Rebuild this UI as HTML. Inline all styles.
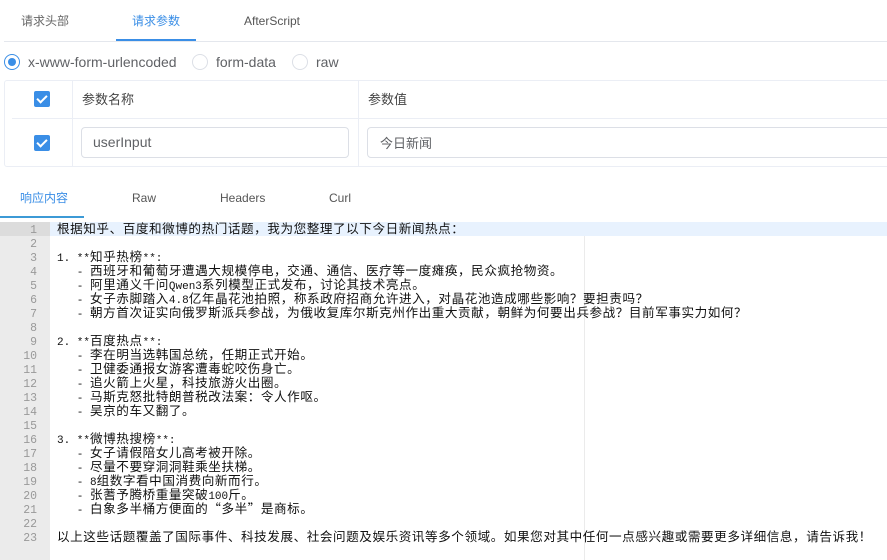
<!DOCTYPE html>
<html><head><meta charset="utf-8"><style>
*{margin:0;padding:0;box-sizing:border-box}
body{width:887px;height:560px;overflow:hidden;background:#fff;font-family:"Liberation Sans","Noto Sans CJK SC",sans-serif;position:relative;color:#606266}
.abs{position:absolute}
.t{font-size:12px;color:#555;line-height:16px}
.cb{position:absolute;width:16px;height:16px;background:#3a8ee6;border-radius:2px}
.cb:after{content:"";position:absolute;left:5px;top:2px;width:4px;height:8px;border:solid #fff;border-width:0 2px 2px 0;transform:rotate(45deg)}
.rad{position:absolute;width:16px;height:16px;border:1px solid #dcdfe6;border-radius:50%;background:#fff}
#ed{position:absolute;left:0;top:222px;width:887px;height:338px}
.ln{height:14px;line-height:14px;font-size:12.6px;letter-spacing:0.55px;white-space:pre;color:#111;font-family:"Noto Sans CJK SC","Liberation Mono",monospace;position:relative}
.ln b{font-weight:normal;font-family:"Liberation Mono",monospace;font-size:11px;letter-spacing:0}
.g{position:absolute;left:0;width:50px;text-align:right;padding-right:13px;color:#999;font-family:"Liberation Mono",monospace;font-size:11.5px;letter-spacing:0;background:#ebebeb;top:0;height:14px;line-height:17px}
.tx{position:absolute;left:57px;top:-1px;line-height:14px}
</style></head><body>
<div class="abs t" style="left:21px;top:13px;color:#666">请求头部</div>
<div class="abs t" style="left:132px;top:13px;color:#3a8ee6">请求参数</div>
<div class="abs t" style="left:244px;top:13px;color:#555">AfterScript</div>
<div class="abs" style="left:4px;top:41px;width:883px;height:1px;background:#e4e7ed"></div>
<div class="abs" style="left:116px;top:39px;width:80px;height:2px;background:#3a8ee6"></div>
<div class="rad" style="left:4px;top:54px;border-color:#3a8ee6"><div style="position:absolute;left:3px;top:3px;width:8px;height:8px;border-radius:50%;background:#3a8ee6"></div></div>
<div class="abs" style="left:28px;top:54px;font-size:14px;color:#606266">x-www-form-urlencoded</div>
<div class="rad" style="left:192px;top:54px"></div>
<div class="abs" style="left:216px;top:54px;font-size:14px">form-data</div>
<div class="rad" style="left:292px;top:54px"></div>
<div class="abs" style="left:316px;top:54px;font-size:14px">raw</div>
<div class="abs" style="left:4px;top:80px;width:900px;height:87px;border:1px solid #ebeef5;border-radius:3px"></div>
<div class="abs" style="left:12px;top:118px;width:880px;height:1px;background:#ebeef5"></div>
<div class="abs" style="left:72px;top:80px;width:1px;height:87px;background:#ebeef5"></div>
<div class="abs" style="left:358px;top:80px;width:1px;height:87px;background:#ebeef5"></div>
<div class="cb" style="left:34px;top:91px"></div>
<div class="cb" style="left:34px;top:135px"></div>
<div class="abs" style="left:82px;top:89px;font-size:13px;color:#444">参数名称</div>
<div class="abs" style="left:368px;top:89px;font-size:13px;color:#444">参数值</div>
<div class="abs" style="left:81px;top:127px;width:268px;height:31px;border:1px solid #dcdfe6;border-radius:4px;font-size:14px;line-height:29px;padding-left:11px;color:#606266">userInput</div>
<div class="abs" style="left:367px;top:127px;width:540px;height:31px;border:1px solid #dcdfe6;border-radius:4px;font-size:13px;line-height:31px;padding-left:12px;color:#606266">今日新闻</div>
<div class="abs t" style="left:20px;top:190px;color:#3a8ee6">响应内容</div>
<div class="abs t" style="left:132px;top:190px">Raw</div>
<div class="abs t" style="left:220px;top:190px">Headers</div>
<div class="abs t" style="left:329px;top:190px">Curl</div>
<div class="abs" style="left:0;top:216px;width:84px;height:2px;background:#3c9ad6"></div>
<div class="abs" style="left:0;top:222px;width:50px;height:338px;background:#ebebeb"></div>
<div class="abs" style="left:584px;top:222px;width:1px;height:338px;background:#ebebeb"></div>
<div id="ed">
<div class="ln" style="background:#e8f2fe"><span class="g" style="background:#dcdcdc">1</span><span class="tx">根据知乎、百度和微博的热门话题，我为您整理了以下今日新闻热点：</span></div>
<div class="ln"><span class="g">2</span></div>
<div class="ln"><span class="g">3</span><span class="tx"><b>1. **</b>知乎热榜<b>**:</b></span></div>
<div class="ln"><span class="g">4</span><span class="tx"><b>   - </b>西班牙和葡萄牙遭遇大规模停电，交通、通信、医疗等一度瘫痪，民众疯抢物资。</span></div>
<div class="ln"><span class="g">5</span><span class="tx"><b>   - </b>阿里通义千问<b>Qwen3</b>系列模型正式发布，讨论其技术亮点。</span></div>
<div class="ln"><span class="g">6</span><span class="tx"><b>   - </b>女子赤脚踏入<b>4.8</b>亿年晶花池拍照，称系政府招商允许进入，对晶花池造成哪些影响？要担责吗？</span></div>
<div class="ln"><span class="g">7</span><span class="tx"><b>   - </b>朝方首次证实向俄罗斯派兵参战，为俄收复库尔斯克州作出重大贡献，朝鲜为何要出兵参战？目前军事实力如何？</span></div>
<div class="ln"><span class="g">8</span></div>
<div class="ln"><span class="g">9</span><span class="tx"><b>2. **</b>百度热点<b>**:</b></span></div>
<div class="ln"><span class="g">10</span><span class="tx"><b>   - </b>李在明当选韩国总统，任期正式开始。</span></div>
<div class="ln"><span class="g">11</span><span class="tx"><b>   - </b>卫健委通报女游客遭毒蛇咬伤身亡。</span></div>
<div class="ln"><span class="g">12</span><span class="tx"><b>   - </b>追火箭上火星，科技旅游火出圈。</span></div>
<div class="ln"><span class="g">13</span><span class="tx"><b>   - </b>马斯克怒批特朗普税改法案：令人作呕。</span></div>
<div class="ln"><span class="g">14</span><span class="tx"><b>   - </b>吴京的车又翻了。</span></div>
<div class="ln"><span class="g">15</span></div>
<div class="ln"><span class="g">16</span><span class="tx"><b>3. **</b>微博热搜榜<b>**:</b></span></div>
<div class="ln"><span class="g">17</span><span class="tx"><b>   - </b>女子请假陪女儿高考被开除。</span></div>
<div class="ln"><span class="g">18</span><span class="tx"><b>   - </b>尽量不要穿洞洞鞋乘坐扶梯。</span></div>
<div class="ln"><span class="g">19</span><span class="tx"><b>   - 8</b>组数字看中国消费向新而行。</span></div>
<div class="ln"><span class="g">20</span><span class="tx"><b>   - </b>张蓍予腾桥重量突破<b>100</b>斤。</span></div>
<div class="ln"><span class="g">21</span><span class="tx"><b>   - </b>白象多半桶方便面的“多半”是商标。</span></div>
<div class="ln"><span class="g">22</span></div>
<div class="ln"><span class="g">23</span><span class="tx">以上这些话题覆盖了国际事件、科技发展、社会问题及娱乐资讯等多个领域。如果您对其中任何一点感兴趣或需要更多详细信息，请告诉我！</span></div>
</div>
</body></html>
